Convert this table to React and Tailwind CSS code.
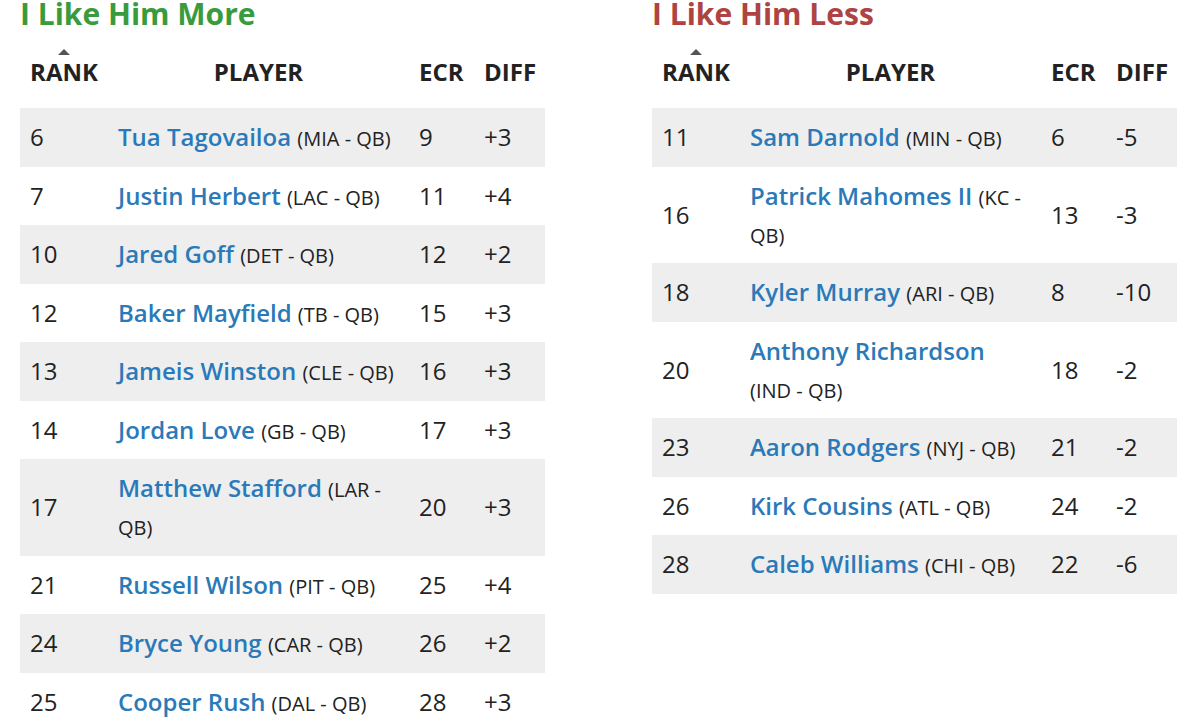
import React from 'react';

const more = [
  { rank: 6, name: 'Tua Tagovailoa', team: 'MIA', ecr: 9, diff: '+3' },
  { rank: 7, name: 'Justin Herbert', team: 'LAC', ecr: 11, diff: '+4' },
  { rank: 10, name: 'Jared Goff', team: 'DET', ecr: 12, diff: '+2' },
  { rank: 12, name: 'Baker Mayfield', team: 'TB', ecr: 15, diff: '+3' },
  { rank: 13, name: 'Jameis Winston', team: 'CLE', ecr: 16, diff: '+3' },
  { rank: 14, name: 'Jordan Love', team: 'GB', ecr: 17, diff: '+3' },
  { rank: 17, name: 'Matthew Stafford', team: 'LAR', ecr: 20, diff: '+3', brk: 'pos' },
  { rank: 21, name: 'Russell Wilson', team: 'PIT', ecr: 25, diff: '+4' },
  { rank: 24, name: 'Bryce Young', team: 'CAR', ecr: 26, diff: '+2' },
  { rank: 25, name: 'Cooper Rush', team: 'DAL', ecr: 28, diff: '+3' },
];

const less = [
  { rank: 11, name: 'Sam Darnold', team: 'MIN', ecr: 6, diff: '-5' },
  { rank: 16, name: 'Patrick Mahomes II', team: 'KC', ecr: 13, diff: '-3', brk: 'pos' },
  { rank: 18, name: 'Kyler Murray', team: 'ARI', ecr: 8, diff: '-10' },
  { rank: 20, name: 'Anthony Richardson', team: 'IND', ecr: 18, diff: '-2', brk: 'team' },
  { rank: 23, name: 'Aaron Rodgers', team: 'NYJ', ecr: 21, diff: '-2' },
  { rank: 26, name: 'Kirk Cousins', team: 'ATL', ecr: 24, diff: '-2' },
  { rank: 28, name: 'Caleb Williams', team: 'CHI', ecr: 22, diff: '-6' },
];

const cell = 'px-[10px] pt-[10px] pb-[10.5px] align-middle';

function Player({ p }) {
  return (
    <td className={`${cell} whitespace-nowrap`}>
      <a href="#" className="font-semibold text-[#2a7ab9]">{p.name}</a>
      {p.brk === 'team' ? <br /> : ' '}
      <span className="text-[20px] leading-[20px]">
        ({p.team} -{p.brk === 'pos' ? <br /> : ' '}QB)
      </span>
    </td>
  );
}

function RankTable({ title, color, rows }) {
  return (
    <div className="w-[525px]">
      <h2 className={`text-[30px] leading-[28px] font-bold ${color}`}>{title}</h2>
      <table className="table-fixed w-[525px] border-collapse text-[24px] leading-[38px] text-[#222]">
        <colgroup>
          <col className="w-[88px]" />
          <col className="w-[301px]" />
          <col className="w-[65px]" />
          <col className="w-[71px]" />
        </colgroup>
        <thead>
          <tr className="text-[24px] leading-[30px] font-bold uppercase">
            <th className="pt-[21px] pb-[21px] px-[10px] align-bottom text-center">
              <div className="mx-auto mb-[2px] w-0 h-0 border-x-[6px] border-x-transparent border-b-[6px] border-b-[#555]" />
              Rank
            </th>
            <th className="pb-[21px] px-[10px] align-bottom text-center">Player</th>
            <th className="pb-[21px] px-[10px] align-bottom text-left">ECR</th>
            <th className="pb-[21px] px-[10px] align-bottom text-left">Diff</th>
          </tr>
        </thead>
        <tbody>
          {rows.map((p, i) => (
            <tr key={p.rank} className={i % 2 === 0 ? 'bg-[#eeeeee]' : 'bg-white'}>
              <td className={cell}>{p.rank}</td>
              <Player p={p} />
              <td className={cell}>{p.ecr}</td>
              <td className={cell}>{p.diff}</td>
            </tr>
          ))}
        </tbody>
      </table>
    </div>
  );
}

export default function App() {
  return (
    <div className="min-h-screen bg-white font-['Open_Sans',sans-serif]">
      <div className="flex gap-[107px] pl-[20px]">
        <RankTable title="I Like Him More" color="text-[#3a9b3c]" rows={more} />
        <RankTable title="I Like Him Less" color="text-[#ad4443]" rows={less} />
      </div>
    </div>
  );
}
